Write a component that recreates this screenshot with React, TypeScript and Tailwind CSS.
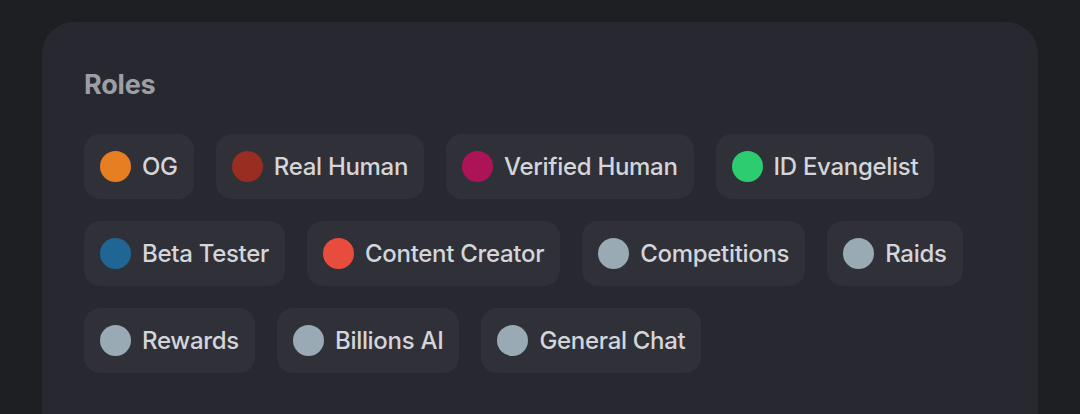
import React from 'react'

type Role = { name: string; color: string }

const roles: Role[][] = [
  [
    { name: 'OG', color: '#e67e22' },
    { name: 'Real Human', color: '#992d22' },
    { name: 'Verified Human', color: '#ad1457' },
    { name: 'ID Evangelist', color: '#2ecc71' },
  ],
  [
    { name: 'Beta Tester', color: '#206694' },
    { name: 'Content Creator', color: '#e74c3c' },
    { name: 'Competitions', color: '#99aab5' },
    { name: 'Raids', color: '#99aab5' },
  ],
  [
    { name: 'Rewards', color: '#99aab5' },
    { name: 'Billions AI', color: '#99aab5' },
    { name: 'General Chat', color: '#99aab5' },
  ],
]

function RoleChip({ role }: { role: Role }) {
  return (
    <div className="flex h-[65px] items-center gap-[11px] rounded-2xl bg-[#303138] pl-4 pr-4">
      <span className="h-[31px] w-[31px] shrink-0 rounded-full" style={{ backgroundColor: role.color }} />
      <span className="text-[24px] font-medium leading-none tracking-[-0.3px] text-[#d4d5da]">{role.name}</span>
    </div>
  )
}

export default function App() {
  return (
    <div className="h-[414px] overflow-hidden bg-[#1e1f22] px-[42px] pt-[22px] font-['Inter','Noto_Sans',sans-serif]">
      <div className="h-[420px] rounded-[32px] bg-[#282930] px-[42px] pt-[49px]">
        <h2 className="text-[27px] font-bold leading-none tracking-[-0.2px] text-[#9c9ea6]">Roles</h2>
        <div className="mt-[36px] flex flex-col gap-[22px]">
          {roles.map((row, i) => (
            <div key={i} className="flex gap-[22px]">
              {row.map((r) => (
                <RoleChip key={r.name} role={r} />
              ))}
            </div>
          ))}
        </div>
      </div>
    </div>
  )
}
